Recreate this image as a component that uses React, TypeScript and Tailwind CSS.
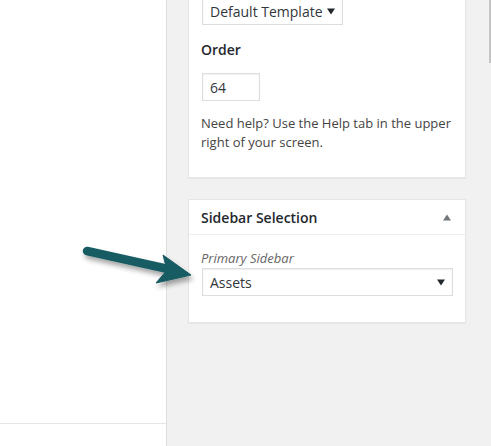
import React from "react";

const font = { fontFamily: '"Open Sans", "Noto Sans", sans-serif' };

function Caret({ up = false }: { up?: boolean }) {
  return (
    <svg width="8" height="7" viewBox="0 0 8 7" className={up ? "text-[#72777c]" : "text-[#23282d]"}>
      {up ? <path d="M0 6.5 L4 0.5 L8 6.5 Z" fill="currentColor" /> : <path d="M0 0.5 L8 0.5 L4 6.5 Z" fill="currentColor" />}
    </svg>
  );
}

function Pointer() {
  return (
    <svg className="pointer-events-none absolute left-0 top-0" width="491" height="446" viewBox="0 0 491 446">
      <defs>
        <filter id="shade" x="-20%" y="-50%" width="140%" height="200%">
          <feDropShadow dx="2" dy="4" stdDeviation="2.5" floodColor="#000" floodOpacity="0.35" />
        </filter>
      </defs>
      <g filter="url(#shade)" fill="#175b62" stroke="#175b62">
        <line x1="87" y1="251" x2="168" y2="269" strokeWidth="8.5" strokeLinecap="round" />
        <path d="M163 255 L191 275 L156 283 L167 270 Z" strokeWidth="1" strokeLinejoin="round" />
      </g>
    </svg>
  );
}

export default function App() {
  return (
    <div className="relative flex h-[446px] w-[491px] overflow-hidden bg-[#f1f1f1] text-[13px] text-[#444]" style={font}>
      {/* Editor column */}
      <div className="flex h-full w-[167px] flex-col border-r border-[#dedede] bg-white">
        <div className="h-[424px] border-b border-[#e5e5e5]" />
      </div>

      {/* Side metaboxes */}
      <div className="flex flex-col gap-[21px] pl-[21px]">
        <div className="w-[278px] border border-t-0 border-[#e5e5e5] bg-white px-3 pb-[25px] shadow-[0_1px_1px_rgba(0,0,0,0.04)]">
          <div className="-mt-[3px] ml-px flex h-[28px] w-[141px] items-center justify-between border border-[#ddd] bg-white pl-[7px] pr-[7px] text-[14px] text-[#32373c] shadow-[inset_0_1px_2px_rgba(0,0,0,0.07)]">
            <span>Default Template</span>
            <Caret />
          </div>
          <p className="mt-[15px] text-[14px] leading-[20px] font-semibold text-[#23282d]">Order</p>
          <div className="ml-px mt-[13px] flex h-[28px] w-[58px] items-center border border-[#ddd] pl-[7px] text-[14px] text-[#32373c] shadow-[inset_0_1px_2px_rgba(0,0,0,0.07)]">
            64
          </div>
          <p className="mt-[13px] leading-[19px]">
            Need help? Use the Help tab in the upper right of your screen.
          </p>
        </div>

        <div className="w-[278px] border border-[#e5e5e5] bg-white shadow-[0_1px_1px_rgba(0,0,0,0.04)]">
          <div className="flex h-[35px] items-center justify-between border-b border-[#eee] pl-3 pr-[14px]">
            <h2 className="text-[14px] font-semibold text-[#23282d]">Sidebar Selection</h2>
            <Caret up />
          </div>
          <div className="px-3 pb-[26px] pt-[14px]">
            <p className="italic leading-[19px] text-[#666]">Primary Sidebar</p>
            <div className="ml-px flex h-[28px] w-[251px] items-center justify-between border border-[#ddd] pl-[7px] pr-[7px] text-[14px] text-[#32373c] shadow-[inset_0_1px_2px_rgba(0,0,0,0.07)]">
              <span>Assets</span>
              <Caret />
            </div>
          </div>
        </div>
      </div>

      {/* scrollbar thumb */}
      <div className="absolute right-0 top-0 h-[63px] w-[2px] bg-[#c4c4c4]" />

      <Pointer />
    </div>
  );
}
